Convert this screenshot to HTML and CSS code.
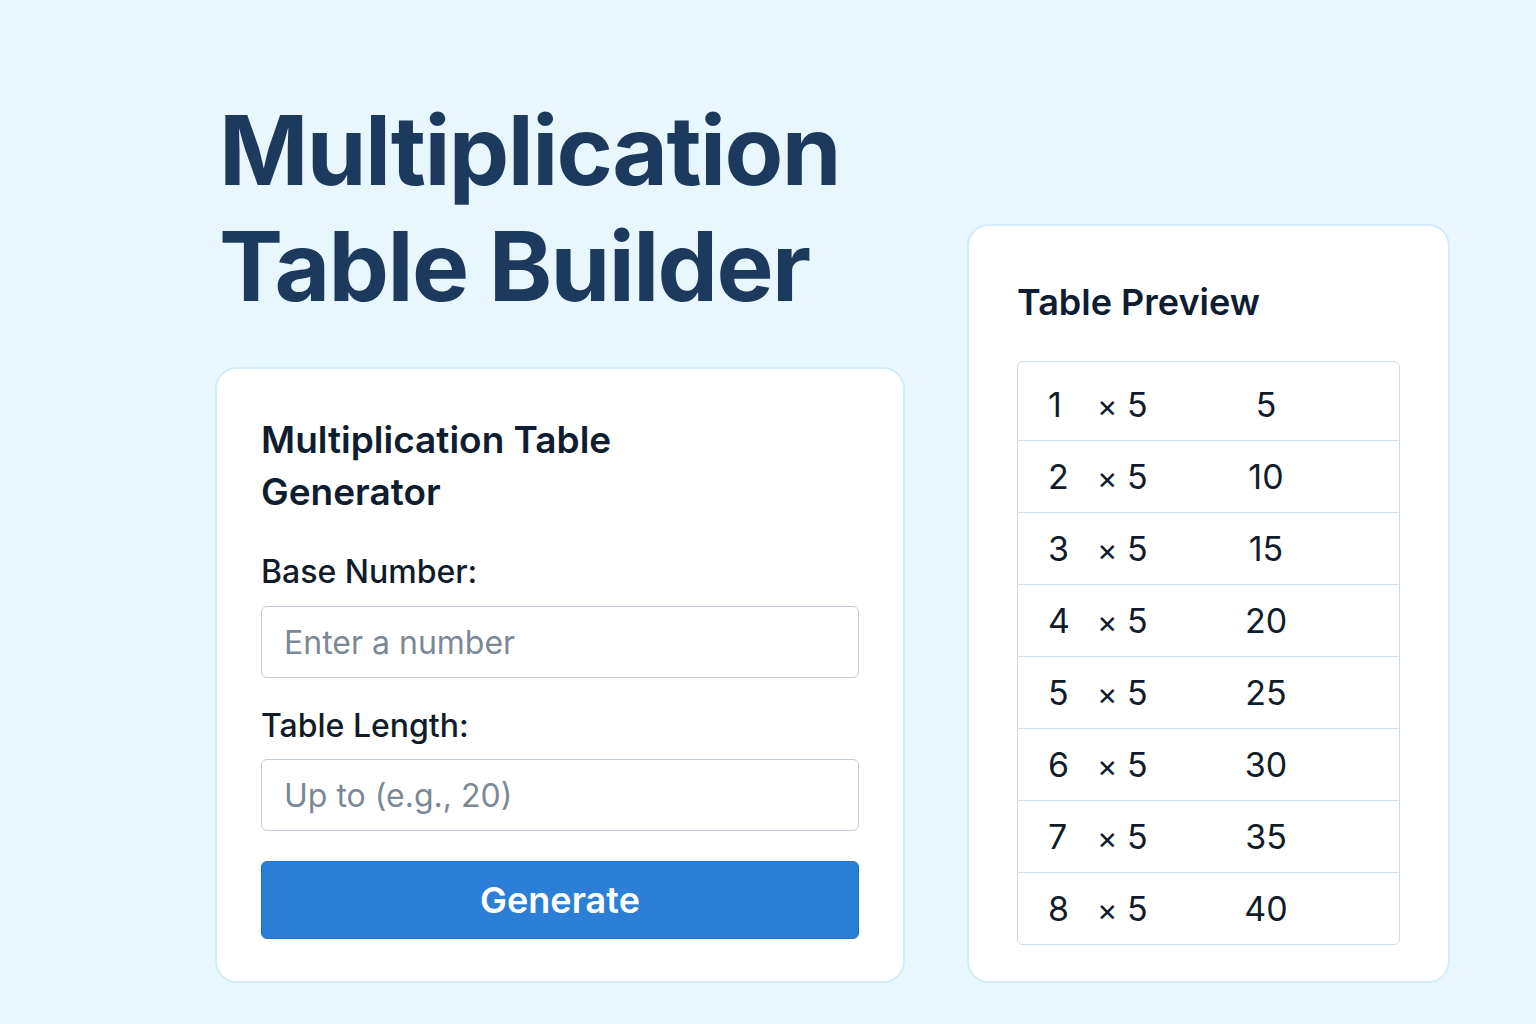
FILE: index.html
```html
<!DOCTYPE html>
<html lang="en">
<head>
    <meta charset="UTF-8">
    <meta name="viewport" content="width=device-width, initial-scale=1.0">
    <title>Multiplication Table Builder</title>
    <link rel="stylesheet" href="styles.css">
</head>
<body>

    <div class="page">
        <div class="left-col">
            <h1 class="page-title">Multiplication<br>Table Builder</h1>

            <div class="card generator-card">
                <h2 class="card-title">Multiplication Table<br>Generator</h2>

                <label class="field-label" for="baseInput">Base Number:</label>
                <input class="field-input" type="text" id="baseInput" placeholder="Enter a number" />

                <label class="field-label second" for="lengthInput">Table Length:</label>
                <input class="field-input" type="text" id="lengthInput" placeholder="Up to (e.g., 20)" />

                <button class="generate-btn" onclick="generateTable()">Generate</button>
            </div>
        </div>

        <div class="card preview-card">
            <h2 class="card-title">Table Preview</h2>
            <div class="preview-table" id="previewTable">
                <div class="row"><span>1</span><span><span class="times">×</span> 5</span><span class="result">5</span></div>
                <div class="row"><span>2</span><span><span class="times">×</span> 5</span><span class="result">10</span></div>
                <div class="row"><span>3</span><span><span class="times">×</span> 5</span><span class="result">15</span></div>
                <div class="row"><span>4</span><span><span class="times">×</span> 5</span><span class="result">20</span></div>
                <div class="row"><span>5</span><span><span class="times">×</span> 5</span><span class="result">25</span></div>
                <div class="row"><span>6</span><span><span class="times">×</span> 5</span><span class="result">30</span></div>
                <div class="row"><span>7</span><span><span class="times">×</span> 5</span><span class="result">35</span></div>
                <div class="row"><span>8</span><span><span class="times">×</span> 5</span><span class="result">40</span></div>
            </div>
        </div>
    </div>

    <script>
        // Build the preview rows from the two inputs
        function generateTable() {
            const base = parseInt(document.getElementById('baseInput').value) || 5;
            const length = parseInt(document.getElementById('lengthInput').value) || 8;
            const table = document.getElementById('previewTable');
            table.innerHTML = '';

            for (let i = 1; i <= length; i++) {
                const row = document.createElement('div');
                row.classList.add('row');
                row.innerHTML = '<span>' + i + '</span><span><span class="times">×</span> ' + base +
                    '</span><span class="result">' + (i * base) + '</span>';
                table.appendChild(row);
            }
        }
    </script>

</body>
</html>
```

FILE: styles.css
```css
body {
    margin: 0;
    padding: 0;
    background: #e8f6fd;
    font-family: 'Inter', 'Noto Sans', sans-serif;
    color: #0f1d31;
}

.page {
    display: grid;
    grid-template-columns: 690px 483px;
    column-gap: 62px;
    align-items: end;
    padding: 92px 0 0 215px;
}

.page-title {
    margin: 0 0 43px 4px;
    font-size: 96px;
    font-weight: 700;
    line-height: 116px;
    letter-spacing: -1.6px;
    color: #1c3a5e;
}

.card {
    background: #fff;
    border: 2px solid #d5ebf7;
    border-radius: 22px;
}

.card-title {
    margin: 0;
    font-size: 37px;
    font-weight: 600;
    line-height: 52px;
    color: #0f1d31;
}

.generator-card {
    padding: 45px 44px 42px;
}

.field-label {
    display: block;
    margin: 34px 0 14px;
    font-size: 32px;
    font-weight: 500;
    line-height: 40px;
    color: #111c2b;
}

.field-label.second {
    margin: 28px 0 13px;
}

.field-input {
    display: block;
    width: 100%;
    height: 72px;
    box-sizing: border-box;
    padding: 0 22px;
    border: 1.5px solid #c3ced9;
    border-radius: 6px;
    font-family: inherit;
    font-size: 32px;
    color: #111c2b;
}

.field-input::placeholder {
    color: #7c8896;
}

.generate-btn {
    display: block;
    width: 100%;
    height: 78px;
    margin-top: 30px;
    border: 1px solid #2173cc;
    border-radius: 6px;
    background: #2b7fd6;
    color: #fff;
    font-family: inherit;
    font-size: 36px;
    font-weight: 600;
    cursor: pointer;
}

.generate-btn:hover {
    background: #2573c4;
}

.preview-card {
    padding: 49px 48px 36px;
}

.preview-card .card-title {
    line-height: 54px;
    font-size: 36px;
}

.preview-table {
    margin-top: 32px;
    border: 1px solid #cfdde8;
    border-radius: 6px;
}

.row {
    display: grid;
    grid-template-columns: 49px 129px 80px;
    align-items: center;
    height: 71px;
    padding-left: 30px;
    border-top: 1px solid #cfdde8;
    font-size: 34px;
    color: #111c2b;
}

.row:first-child {
    border-top: none;
    height: 78px;
    padding-top: 7px;
    box-sizing: border-box;
}

.times {
    font-size: 31px;
}

.result {
    text-align: center;
}
```
